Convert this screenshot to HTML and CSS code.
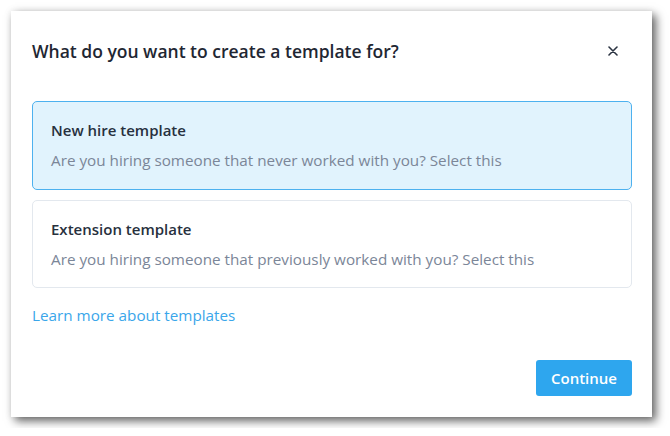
FILE: index.html
```html
<!DOCTYPE html>
<html>
<head>
<meta charset="utf-8">
<link rel="stylesheet" href="styles.css">
</head>
<body>
<div class="modal">
  <div class="header">
    <h1 class="title">What do you want to create a template for?</h1>
    <button class="close" aria-label="Close">
      <svg width="10" height="10" viewBox="0 0 10 10"><path d="M1 1L9 9M9 1L1 9" stroke="#2b3442" stroke-width="1.6" stroke-linecap="round"/></svg>
    </button>
  </div>
  <div class="options">
    <div class="option selected">
      <div class="opt-title">New hire template</div>
      <div class="opt-desc">Are you hiring someone that never worked with you? Select this</div>
    </div>
    <div class="option">
      <div class="opt-title">Extension template</div>
      <div class="opt-desc">Are you hiring someone that previously worked with you? Select this</div>
    </div>
  </div>
  <a class="learn" href="#">Learn more about templates</a>
  <div class="footer">
    <button class="continue">Continue</button>
  </div>
</div>
</body>
</html>
```
FILE: styles.css
```css
* { box-sizing: border-box; }
html, body { margin: 0; background: #ffffff; }
body { padding: 11px; font-family: "Open Sans", "Noto Sans", sans-serif; }
.modal {
  width: 641px;
  height: 406px;
  background: #fff;
  box-shadow: 4px 4px 9px rgba(0,0,0,0.6), 0 0 8px rgba(0,0,0,0.08);
  padding: 28px 20px 21px 21px;
  display: flex;
  flex-direction: column;
}
.header { display: flex; align-items: center; justify-content: space-between; height: 24px; }
.title { margin: 0; font-size: 17.5px; font-weight: 600; line-height: 24px; color: #1f2733; }
.close { border: 0; background: none; padding: 0; width: 10px; height: 10px; margin-right: 14px; display: flex; }
.options { margin-top: 38px; display: flex; flex-direction: column; gap: 10px; }
.option {
  border: 1px solid #e3e8ee;
  border-radius: 5px;
  padding: 18px 18px 18.5px;
  display: flex;
  flex-direction: column;
  gap: 10px;
  background: #fff;
}
.option.selected { background: #e1f3fd; border-color: #4db1ef; }
.opt-title { font-size: 15px; font-weight: 600; line-height: 20px; color: #27303d; }
.opt-desc { font-size: 15.25px; line-height: 20px; color: #7b8698; }
.learn { margin-top: 16.5px; font-size: 15.25px; line-height: 20px; color: #3aa6ea; text-decoration: none; align-self: flex-start; }
.footer { margin-top: auto; display: flex; justify-content: flex-end; }
.continue {
  font-family: inherit;
  border: 0;
  background: #2ea6ee;
  color: #fff;
  font-size: 15px;
  font-weight: 600;
  height: 36px;
  width: 96px;
  border-radius: 3px;
}
```
